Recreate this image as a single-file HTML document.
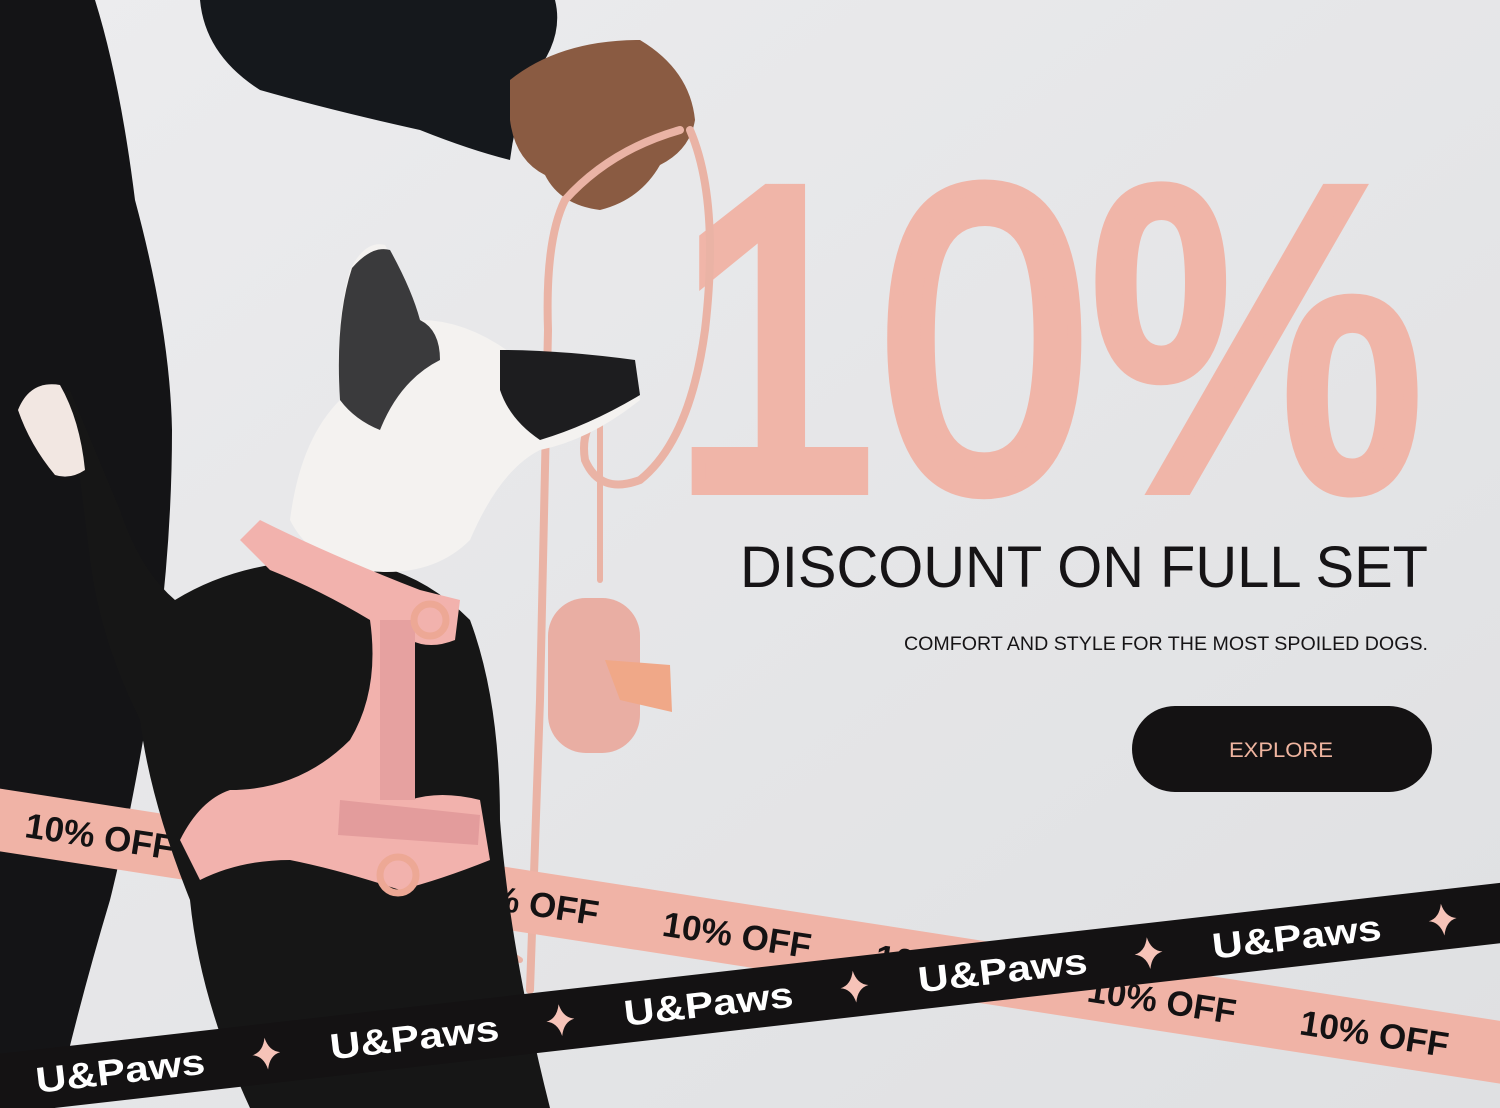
<!DOCTYPE html>
<html><head><meta charset="utf-8"><style>
html,body{margin:0;padding:0}
body{width:1500px;height:1108px;overflow:hidden;background:#e6e6e8}
svg{display:block}
</style></head><body>
<svg width="1500" height="1108" viewBox="0 0 1500 1108" xmlns="http://www.w3.org/2000/svg">
<defs>
<linearGradient id="bg" x1="0" y1="0" x2="1" y2="1"><stop offset="0" stop-color="#ececee"/><stop offset="1" stop-color="#dfe0e2"/></linearGradient>
</defs>
<rect width="1500" height="1108" fill="url(#bg)"/>
<!-- big 10% -->
<text x="670" y="487" style="font-family:'Liberation Sans',sans-serif" font-size="429" fill="#f0b5a8" stroke="#f0b5a8" stroke-width="16" stroke-linejoin="miter" textLength="754" lengthAdjust="spacingAndGlyphs">10%</text>
<!-- headings -->
<text x="740" y="587" style="font-family:'Liberation Sans',sans-serif" font-size="58" fill="#161416" textLength="688" lengthAdjust="spacingAndGlyphs">DISCOUNT ON FULL SET</text>
<text x="904" y="650" style="font-family:'Liberation Sans',sans-serif" font-size="19" fill="#161416" textLength="524" lengthAdjust="spacingAndGlyphs">COMFORT AND STYLE FOR THE MOST SPOILED DOGS.</text>
<rect x="1132" y="706" width="300" height="86" rx="43" fill="#141213"/>
<text x="1281" y="757" text-anchor="middle" style="font-family:'Liberation Sans',sans-serif" font-size="21" fill="#f0b5a0" textLength="104" lengthAdjust="spacingAndGlyphs">EXPLORE</text>

<!-- person body -->
<path d="M0 0 L95 0 Q120 80 135 200 Q170 330 172 430 Q172 560 150 700 Q130 820 110 900 Q80 1000 55 1108 L0 1108 Z" fill="#141416"/>
<!-- sleeve -->
<path d="M200 0 L555 0 Q565 40 530 80 Q515 120 510 160 Q470 150 420 130 Q330 110 260 90 Q205 55 200 0 Z" fill="#15181c"/>
<!-- hand -->
<path d="M510 80 Q560 40 640 40 Q690 70 695 120 Q690 150 660 165 Q640 200 600 210 Q560 205 545 175 Q515 160 510 120 Z" fill="#8a5b42"/>
<!-- leash -->
<g fill="none" stroke="#eab3a5" stroke-linecap="round">
<path d="M690 130 Q720 200 705 330 Q690 440 640 480 Q600 495 585 460 Q580 430 600 410" stroke-width="8"/>
<path d="M680 130 Q610 150 565 200 Q545 240 548 330 Q545 500 540 700 Q535 850 530 990" stroke-width="8"/>
<path d="M600 420 Q600 500 600 580" stroke-width="6"/>
<path d="M440 880 Q455 920 520 960" stroke-width="6"/>
</g>
<!-- poop bag holder -->
<rect x="548" y="598" width="92" height="155" rx="38" fill="#e9aea3"/>
<path d="M605 660 L670 665 L672 712 L620 700 Z" fill="#f0a888"/>
<!-- pink ribbon -->
<g transform="translate(0,820) rotate(8.8)">
<rect x="-60" y="-31" width="1700" height="62" fill="#f0b3a6"/>
<g style="font-family:'Liberation Sans',sans-serif" font-weight="bold" font-size="35" fill="#141213">
<text x="26" y="13">10% OFF</text><text x="241" y="13">10% OFF</text><text x="456" y="13">10% OFF</text><text x="671" y="13">10% OFF</text><text x="886" y="13">10% OFF</text><text x="1101" y="13">10% OFF</text><text x="1316" y="13">10% OFF</text><text x="1531" y="13">10% OFF</text>
</g>
</g>
<!-- dog -->
<path d="M80 480 Q60 440 40 400 L70 390 Q95 450 120 510 Q140 570 175 600 Q240 560 330 560 Q410 560 470 620 Q500 700 500 820 Q510 950 550 1108 L250 1108 Q200 1000 190 900 Q150 800 140 720 Q100 640 90 560 Z" fill="#161616"/>
<path d="M18 410 Q30 380 60 385 Q80 420 85 470 Q70 480 55 475 Q30 445 18 410 Z" fill="#f2e7e2"/>
<path d="M290 520 Q300 440 340 400 Q335 320 350 270 Q365 240 385 245 Q410 290 420 320 Q470 320 520 360 Q580 360 635 360 L640 400 Q590 440 540 450 Q500 470 470 540 Q430 580 360 570 Q310 560 290 520 Z" fill="#f4f2f0"/>
<path d="M340 400 Q335 320 352 268 Q372 245 390 250 Q412 290 420 320 Q440 330 440 360 Q400 380 380 430 Q355 420 340 400 Z" fill="#3a3a3c"/>
<path d="M500 350 Q560 350 635 360 L640 395 Q590 425 540 440 Q510 420 500 390 Z" fill="#1d1d1f"/>
<!-- harness -->
<path d="M240 540 L260 520 Q330 555 420 590 L460 600 L455 640 Q430 650 410 640 L410 800 Q440 790 480 800 L490 860 Q440 880 400 890 Q340 870 290 860 Q240 860 200 880 L180 840 Q200 800 230 790 Q300 790 350 740 Q380 690 370 620 Q320 590 270 570 Z" fill="#f2b2ad"/>
<path d="M380 620 L415 620 L415 800 L380 800 Z" fill="#e6a1a0"/>
<path d="M340 800 L480 815 L478 845 L338 835 Z" fill="#e39c9c"/>
<circle cx="398" cy="875" r="18" fill="none" stroke="#eda895" stroke-width="7"/>
<circle cx="430" cy="620" r="16" fill="none" stroke="#eda895" stroke-width="7"/>
<!-- black ribbon -->
<g transform="translate(0,1084) rotate(-6.5)">
<rect x="-60" y="-30" width="1700" height="60" fill="#141213"/>
<g style="font-family:'Liberation Sans',sans-serif" font-weight="bold" font-size="36" fill="#ffffff">
<text x="36" y="13" textLength="170" lengthAdjust="spacingAndGlyphs">U&amp;Paws</text>
<text x="332" y="13" textLength="170" lengthAdjust="spacingAndGlyphs">U&amp;Paws</text>
<text x="628" y="13" textLength="170" lengthAdjust="spacingAndGlyphs">U&amp;Paws</text>
<text x="924" y="13" textLength="170" lengthAdjust="spacingAndGlyphs">U&amp;Paws</text>
<text x="1220" y="13" textLength="170" lengthAdjust="spacingAndGlyphs">U&amp;Paws</text>
</g>
<g fill="#f6c3b8">
<path d="M268 -16 Q271 -2 282 0 Q271 2 268 16 Q265 2 254 0 Q265 -2 268 -16 Z"/>
<path d="M564 -16 Q567 -2 578 0 Q567 2 564 16 Q561 2 550 0 Q561 -2 564 -16 Z"/>
<path d="M860 -16 Q863 -2 874 0 Q863 2 860 16 Q857 2 846 0 Q857 -2 860 -16 Z"/>
<path d="M1156 -16 Q1159 -2 1170 0 Q1159 2 1156 16 Q1153 2 1142 0 Q1153 -2 1156 -16 Z"/>
<path d="M1452 -16 Q1455 -2 1466 0 Q1455 2 1452 16 Q1449 2 1438 0 Q1449 -2 1452 -16 Z"/>
</g>
</g>
</svg>
</body></html>
